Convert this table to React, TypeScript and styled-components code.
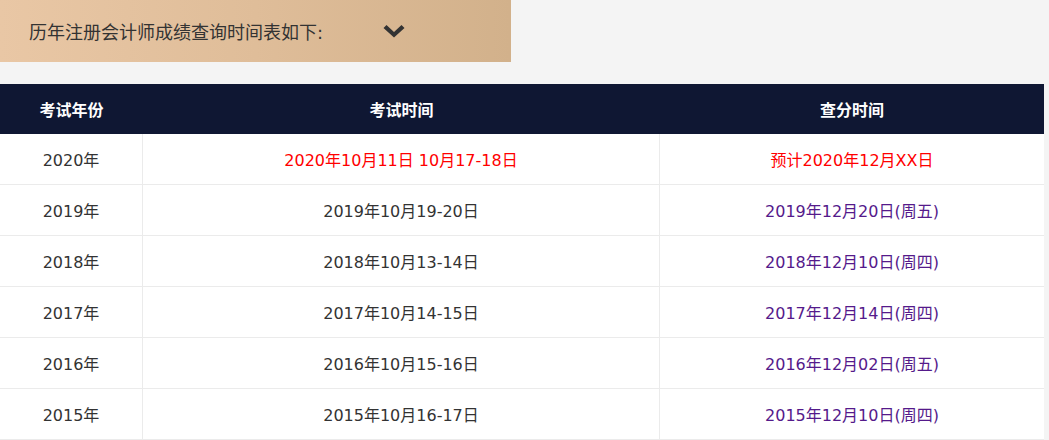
import React from "react";
import styled, { createGlobalStyle } from "styled-components";

const GlobalStyle = createGlobalStyle`
  html, body {
    margin: 0;
    padding: 0;
    background: #f4f4f4;
    font-family: "DejaVu Sans", "Noto Sans CJK SC", sans-serif;
  }
`;

interface IRow {
  year: string;
  exam: string;
  score: string;
  current?: boolean;
}

const rows: IRow[] = [
  { year: "2020年", exam: "2020年10月11日 10月17-18日", score: "预计2020年12月XX日", current: true },
  { year: "2019年", exam: "2019年10月19-20日", score: "2019年12月20日(周五)" },
  { year: "2018年", exam: "2018年10月13-14日", score: "2018年12月10日(周四)" },
  { year: "2017年", exam: "2017年10月14-15日", score: "2017年12月14日(周四)" },
  { year: "2016年", exam: "2016年10月15-16日", score: "2016年12月02日(周五)" },
  { year: "2015年", exam: "2015年10月16-17日", score: "2015年12月10日(周四)" }
];

const Page = styled.div`
  width: 1049px;
  height: 440px;
  overflow: hidden;
  display: flex;
  flex-direction: column;
  gap: 22px;
`;

const Banner = styled.div`
  width: 511px;
  height: 62px;
  box-sizing: border-box;
  padding: 0 0 0 29px;
  display: flex;
  align-items: center;
  background: linear-gradient(90deg, #e9c7a5 0%, #dfbd99 50%, #d2b18b 100%);
`;

const BannerText = styled.span`
  width: 354px;
  font-size: 18px;
  color: #333;
`;

const Table = styled.div`
  width: 1044px;
  display: grid;
  grid-template-columns: 143px 517px 384px;
  background: #fff;
`;

const HeadCell = styled.div`
  height: 50px;
  background: #0f1733;
  color: #fff;
  font-weight: bold;
  font-size: 16px;
  display: flex;
  align-items: center;
  justify-content: center;
`;

interface ICell {
  tone?: "red" | "purple";
  last?: boolean;
}

const Cell = styled.div<ICell>`
  height: 51px;
  box-sizing: border-box;
  display: flex;
  align-items: center;
  justify-content: center;
  font-size: 16px;
  color: ${p => (p.tone === "red" ? "#ff0000" : p.tone === "purple" ? "#551a8b" : "#333")};
  border-bottom: 1px solid #ebebeb;
  border-right: ${p => (p.last ? "none" : "1px solid #ebebeb")};
`;

const Chevron = () => (
  <svg width="22" height="13" viewBox="0 0 22 13">
    <path d="M0.5 3 L3.5 0 L11 7 L18.5 0 L21.5 3 L11 12.5 Z" fill="#333" />
  </svg>
);

const App: React.FC = () => (
  <>
    <GlobalStyle />
    <Page>
      <Banner>
        <BannerText>历年注册会计师成绩查询时间表如下:</BannerText>
        <Chevron />
      </Banner>
      <Table>
        <HeadCell>考试年份</HeadCell>
        <HeadCell>考试时间</HeadCell>
        <HeadCell>查分时间</HeadCell>
        {rows.map(r => (
          <React.Fragment key={r.year}>
            <Cell>{r.year}</Cell>
            <Cell tone={r.current ? "red" : undefined}>{r.exam}</Cell>
            <Cell last={true} tone={r.current ? "red" : "purple"}>{r.score}</Cell>
          </React.Fragment>
        ))}
      </Table>
    </Page>
  </>
);

export default App;
